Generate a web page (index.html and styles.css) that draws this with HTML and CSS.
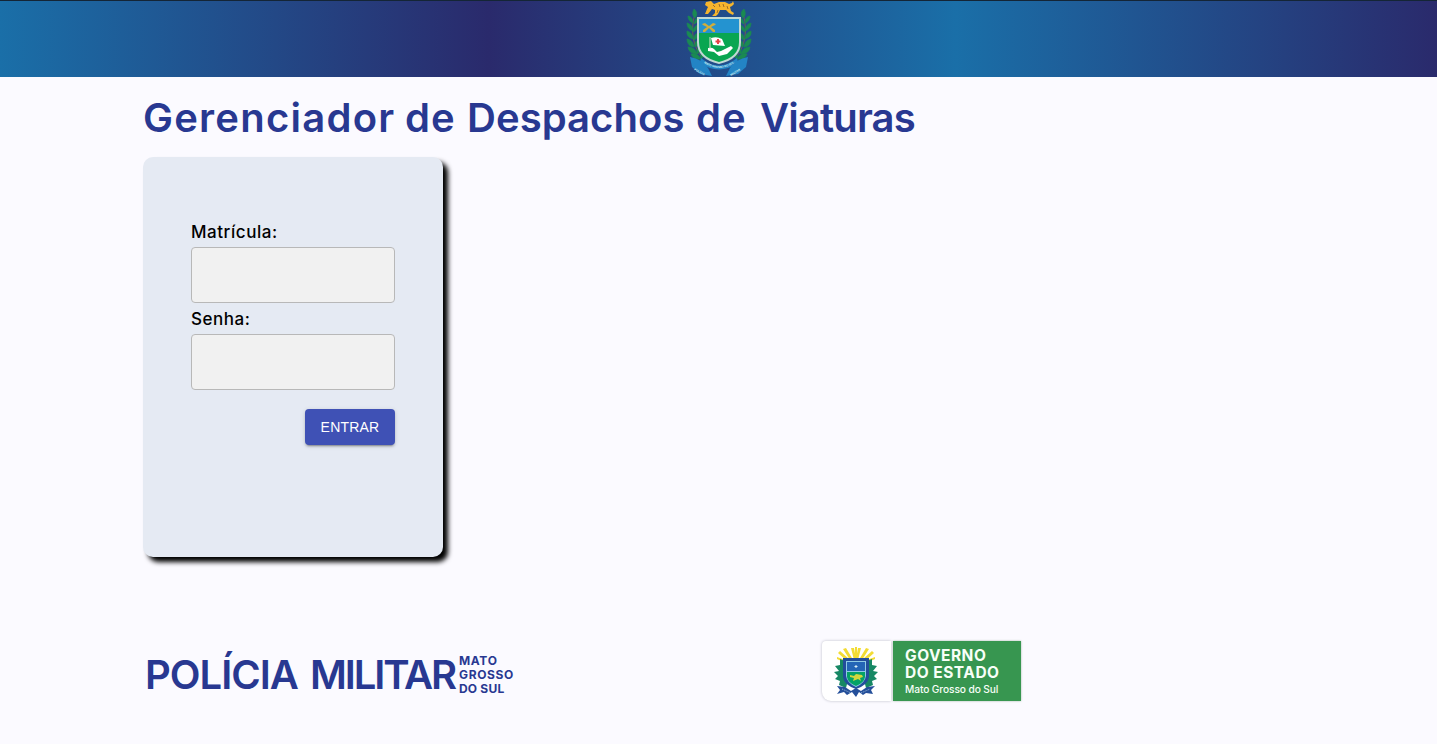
FILE: index.html
```html
<!DOCTYPE html>
<html lang="pt-BR">
<head>
<meta charset="utf-8">
<title>Gerenciador de Despachos de Viaturas</title>
<link rel="stylesheet" href="styles.css">
</head>
<body>
<header class="topbar">
  <svg class="crest" viewBox="0 0 66 76" aria-label="Polícia Militar">
    <defs>
      <g id="branch">
        <path d="M9 12q-5 18 0 32 3 9 8 13" fill="none" stroke="#6b5f50" stroke-width="1"/>
        <path d="M9 17q-4-3-1-9 5 4 1 9zM7 22q-5-2-5-7 5 1 5 7zM8 23q1-6 4-6 0 5-4 6zM7 30q-6-2-6-8 6 2 6 8zM7 31q0-5 4-7 1 5-4 7zM7 38q-7-2-6-8 6 2 6 8zM8 39q-1-5 4-7 1 5-4 7zM8 46q-7-1-7-8 6 1 7 8zM9 46q-1-5 3-7 2 5-3 7zM11 53q-8 0-9-7 7 0 9 7zM11 53q-1-5 2-7 3 4-2 7zM15 58q-8 1-10-5 7-1 10 5zM15 58q-1-5 1-6 4 2-1 6z" fill="#1a8a52" stroke="#1a8a52" stroke-width=".7"/>
      </g>
      <path id="ribbonCurve" d="M16 60.500q17 13 34 0"/>
    </defs>
    <use href="#branch"/>
    <use href="#branch" transform="translate(66 0) scale(-1 1)"/>
    <path d="M4 56q12 2 18 11l4 8-12-2-8-7zM62 56q-12 2-18 11l-4 8 12-2 8-7z" fill="#2384c5"/>
    <path d="M11 16h44v25q0 17-22 22Q11 58 11 41z" fill="#c1d9d4"/>
    <path d="M13 18h40v14H13z" fill="#2493d0"/>
    <path d="M13 32h40v9q0 15-20 20-20-5-20-20z" fill="#09a651"/>
    <path d="M16 23l3-1 4 3 4-3 3 1-1 1-4 2 4 3v2h-2l-4-4-4 4h-2v-2l4-3-4-2z" fill="#d1ae3b"/>
    <path d="M25 37q6-2 11 1l3 7-12-1z" fill="#fff"/>
    <path d="M32 38v5M29.500 40.500h5" stroke="#e54247" stroke-width="2"/>
    <path d="M22 47q4-1 6 1l3 3 4-1 10-5 2 2-6 6-8 2-5-4-6-1z" fill="#fff"/>
    <path d="M24 36v12" stroke="#dce5ce"/>
    <path d="M20 1l5-1 3 3 5-2h6l4 2 3-1 1-2 1 3-2 2-2 1 1 4 3 2-1 2-4-2-3-3h-6l-2 4-2 2h-4l3-3v-3l-3-1-4 5h-3l2-5 1-2-3-2z" fill="#f5b52d"/>
    <path d="M27 4l2 2M33 3l1 3M37 3l1 3M41 5l1 3M32 9l-1 3" stroke="#9e6c27" stroke-width="1"/>
    <path d="M15 57q18 15 36 0l1 5Q33 75 14 62z" fill="#2384c5"/>
    <text class="crest-word"><textPath href="#ribbonCurve" startOffset="50%" text-anchor="middle">MATO GROSSO DO SUL</textPath></text>
    <text class="crest-word crest-side" transform="translate(8 69) rotate(28)">POLÍCIA</text>
    <text class="crest-word crest-side" transform="translate(45 75) rotate(-32)">MILITAR</text>
  </svg>
</header>
<main class="page">
  <h1 class="title"><span class="w1">Gerenciador</span> <span class="w2">de</span> <span class="w3">Despachos</span> <span class="w4">de</span> <span class="w5">Viaturas</span></h1>
  <form class="card">
    <label class="label" for="mat">Matrícula:</label>
    <input class="field" id="mat" type="text">
    <label class="label" for="senha">Senha:</label>
    <input class="field" id="senha" type="password">
    <button class="submit" type="button">ENTRAR</button>
  </form>
  <footer class="footer">
    <div class="police"><div class="police-name"><span class="policia">POLÍCIA</span><span class="militar">MILITAR</span></div><div class="state"><span class="mato">MATO</span><span class="grosso">GROSSO</span><span class="sul">DO SUL</span></div></div>
    <div class="government">
      <div class="seal">
        <svg viewBox="0 0 44 52">
          <path d="M20 14L17 2h3l2 11 2-11h3l-3 12zM16 14L9 3l3-1 6 10zM28 14l7-11-3-1-6 10zM13 15L4 7l2-2 9 8zM31 15l9-8-2-2-9 8zM12 17L3 13v-2l11 4zM32 17l9-4v-2l-11 4zM21 1h2v12h-2z" fill="#f3dc34"/>
          <path d="M6 13l5 2-1 6 3 3-3 5 4 5-2 8-7-3 1-4-5-2 3-3-4-4 5-1-4-5 5-1zM38 13l-5 2 1 6-3 3 3 5-4 5 2 8 7-3-1-4 5-2-3-3 4-4-5-1 4-5-5-1z" fill="#178864"/>
          <path d="M9 12h26v19q-1 8-13 12Q10 39 9 31z" fill="#234e9b"/>
          <path d="M12 15h20v15q-1 7-10 11-9-4-10-11z" fill="#8fcbe5"/>
          <path d="M13 16h18v9H13z" fill="#2465b6"/>
          <path d="M13 26h18v5q-1 6-9 9-8-3-9-9z" fill="#05a267"/>
          <path d="M22 19v3M20.500 20.500h3" stroke="#d8edf6"/>
          <path d="M16 29l4 1 2-2 6 1 1 2-3 1 1 3-3-2-5 2 1-3-4-1z" fill="#d2d73d"/>
          <path d="M3 40l8 1 6 4 5-3 5 3 6-4 8-1-4 4 2 4-7-1-3 2-4-3-3 5-4-5-5 3-3-3-7 2 3-4z" fill="#244f9a"/>
          <path d="M8 43l9 4M27 47l9-4" stroke="#96b6d6" stroke-dasharray="1 1"/>
        </svg>
      </div>
      <div class="gov-text"><span class="governo">GOVERNO</span><span class="estado">DO ESTADO</span><small>Mato Grosso do Sul</small></div>
    </div>
  </footer>
</main>
</body>
</html>
```
FILE: styles.css
```css
* { box-sizing: border-box; }
body { margin: 0; height: 744px; overflow: hidden; background: #fbfaff; font-family: Inter, "Liberation Sans", sans-serif; }
.topbar { height: 77px; border-top: 1px solid #142536; background: linear-gradient(90deg, #1a6fa8 0%, #2a2a6c 34%, #1a6fa8 66.5%, #2a2a6c 100%); display: flex; justify-content: center; }
.crest { width: 66px; height: 76px; }
.crest-word { font: bold 2.8px "Liberation Sans", sans-serif; fill: #d9f2f3; }
.crest-side { font-size: 2.8px; }
.page { margin-left: 143px; }
.title { display: flex; height: 80px; margin: 0; padding-top: 17px; color: #283891; font-size: 40px; line-height: 48px; font-weight: 600; white-space: nowrap; }
.title span { flex: none; }
.w1 { width: 262px; letter-spacing: 1.25px; }
.w2, .w4 { letter-spacing: 1px; }
.w2 { width: 62px; }
.w3 { width: 229px; letter-spacing: .05px; }
.w4 { width: 64px; }
.w5 { width: 158px; letter-spacing: -.85px; }
.card { width: 300px; height: 400px; padding: 64px 48px; display: flex; flex-direction: column; background: #e5eaf3; border-radius: 10px; box-shadow: 5px 5px 5px #000; }
.label { height: 26px; line-height: 22px; font-size: 17px; font-weight: 500; letter-spacing: .55px; color: #000; }
.field { width: 204px; height: 56px; margin: 0 0 5px; border: 1px solid #b8b8b8; border-radius: 4px; background: #f1f1f1; }
.submit { width: 90px; height: 36px; margin: 14px 0 0 auto; padding: 0; border: 0; border-radius: 4px; background: #3f51b5; color: #fff; font: 14px/36px "Liberation Sans", sans-serif; letter-spacing: .2px; box-shadow: 0 3px 1px -2px #0003, 0 2px 2px #0002, 0 1px 5px #0002; }
.footer { display: flex; height: 64px; margin-top: 82px; }
.police { display: flex; width: 679px; height: 64px; color: #283891; }
.police-name { display: flex; flex: none; width: 316px; padding: 12px 0 0 2px; font-size: 40px; line-height: 48px; font-weight: 600; }
.policia { flex: none; width: 165px; letter-spacing: -1px; }
.militar { letter-spacing: -2.1px; white-space: nowrap; }
.state { display: flex; flex-direction: column; padding-top: 15px; font-size: 12px; font-weight: 700; line-height: 14px; }
.mato, .grosso { letter-spacing: .65px; }
.sul { letter-spacing: .2px; }
.government { display: flex; width: 199px; height: 62px; padding-top: 2px; }
.seal { flex: none; width: 69px; height: 60px; display: flex; justify-content: center; padding-top: 5px; background: #fff; border-radius: 4px 0 0 9px; box-shadow: 0 0 3px #bcbcc7; }
.seal svg { width: 44px; height: 52px; margin-right: 2px; }
.gov-text { flex: none; width: 128px; height: 60px; margin-left: 2px; padding: 6px 0 0 12px; background: #379650; color: #f7fff8; display: flex; flex-direction: column; font-size: 15.5px; font-weight: 700; line-height: 17px; letter-spacing: .5px; box-shadow: 0 0 2px #a5b9aa; }
.gov-text small { font-size: 10.2px; font-weight: 500; line-height: 16px; letter-spacing: -.1px; white-space: nowrap; }
```
